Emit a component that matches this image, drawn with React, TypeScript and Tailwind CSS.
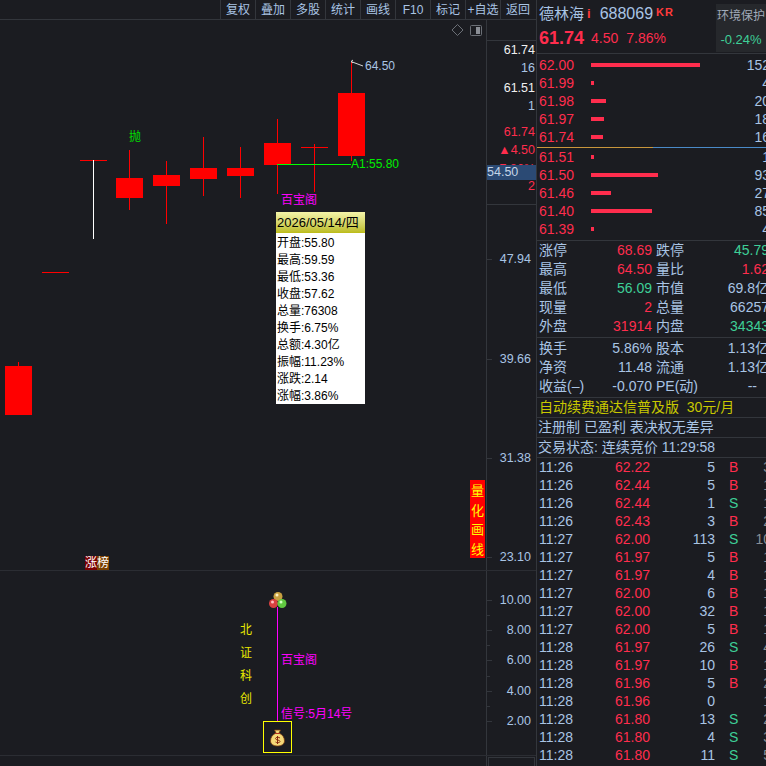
const FONT = "font-['Liberation_Sans','Noto_Sans_CJK_SC',sans-serif]";

const toolbar = ['复权', '叠加', '多股', '统计', '画线', 'F10', '标记', '+自选', '返回'];

const asks = [
  ['62.00', 109, '152'],
  ['61.99', 3, '4'],
  ['61.98', 15, '20'],
  ['61.97', 13, '18'],
  ['61.74', 12, '16'],
] as const;
const bids = [
  ['61.51', 3, '1'],
  ['61.50', 67, '93'],
  ['61.46', 20, '27'],
  ['61.40', 61, '85'],
  ['61.39', 3, '4'],
] as const;

const RED = 'text-[#ff2d4d]';
const GRN = 'text-[#3ecf97]';
const BLU = 'text-[#a9c4e4]';

const stats1 = [
  ['涨停', '68.69', RED, '跌停', '45.79', GRN],
  ['最高', '64.50', RED, '量比', '1.62', RED],
  ['最低', '56.09', GRN, '市值', '69.8亿', BLU],
  ['现量', '2', RED, '总量', '66257', BLU],
  ['外盘', '31914', RED, '内盘', '34343', GRN],
];
const stats2 = [
  ['换手', '5.86%', BLU, '股本', '1.13亿', BLU],
  ['净资', '11.48', BLU, '流通', '1.13亿', BLU],
  ['收益(–)', '-0.070', BLU, 'PE(动)', '--', BLU],
];

const ticks = [
  ['11:26', '62.22', '5', 'B', '3'],
  ['11:26', '62.44', '5', 'B', '1'],
  ['11:26', '62.44', '1', 'S', '1'],
  ['11:26', '62.43', '3', 'B', '2'],
  ['11:27', '62.00', '113', 'S', '10'],
  ['11:27', '61.97', '5', 'B', '1'],
  ['11:27', '61.97', '4', 'B', '1'],
  ['11:27', '62.00', '6', 'B', '1'],
  ['11:27', '62.00', '32', 'B', '1'],
  ['11:27', '62.00', '5', 'B', '1'],
  ['11:28', '61.97', '26', 'S', '4'],
  ['11:28', '61.97', '10', 'B', '1'],
  ['11:28', '61.96', '5', 'B', '2'],
  ['11:28', '61.96', '0', '', '1'],
  ['11:28', '61.80', '13', 'S', '2'],
  ['11:28', '61.80', '4', 'S', '3'],
  ['11:28', '61.80', '11', 'S', '5'],
];

const tip = ['开盘:55.80', '最高:59.59', '最低:53.36', '收盘:57.62', '总量:76308', '换手:6.75%', '总额:4.30亿', '振幅:11.23%', '涨跌:2.14', '涨幅:3.86%'];

function Candles() {
  const c: [number, number, number, number, number][] = [
    [5, 366, 415, 362, 415],
    [116, 178, 198, 150, 210],
    [153, 175, 186, 161, 224],
    [190, 168, 179, 137, 196],
    [227, 168, 176, 147, 198],
    [264, 143, 165, 119, 194],
    [338, 93, 156, 62, 161],
  ];
  return (
    <svg className="absolute left-0 top-0" width="486" height="551">
      <g transform="translate(0,-20)" shapeRendering="crispEdges">
        {c.map(([x, t, b, h, l]) => (
          <g key={x}>
            <rect x={x + 13} y={h} width="1" height={l - h} fill="#ff0000" />
            <rect x={x} y={t} width="27" height={b - t} fill="#ff0000" />
          </g>
        ))}
        <rect x="42" y="272" width="27" height="1" fill="#ff0000" />
        <rect x="80" y="160" width="27" height="1" fill="#ff0000" />
        <rect x="93" y="160" width="1" height="79" fill="#ffffff" />
        <rect x="301" y="147" width="27" height="1" fill="#ff0000" />
        <rect x="314" y="144" width="1" height="48" fill="#ff0000" />
        <rect x="277" y="164" width="74" height="1" fill="#00ff00" />
      </g>
      <path d="M351 41.500 L353 40 M351 41.500 L353 43 M351 41.500 L363 46" stroke="#d8d8d8" fill="none" />
      <path d="M457.500 4.500 L463 10 L457.500 15.500 L452 10 Z" stroke="#6b6f76" fill="none" />
      <rect x="470.500" y="5.500" width="11" height="10" rx="1" stroke="#6b6f76" fill="none" />
      <rect x="476" y="7" width="4" height="7" fill="#8a8e95" />
    </svg>
  );
}

function Label({ className, children }: { className: string; children: React.ReactNode }) {
  return <div className={`absolute leading-none whitespace-nowrap ${className}`}>{children}</div>;
}

function AxisTick({ y, label }: { y: number; label: string }) {
  return (
    <div className="absolute left-0 right-0 flex items-center justify-end pr-[5px] h-[14px]" style={{ top: y - 7 }}>
      <span className="absolute left-0 top-[7px] w-[5px] h-px bg-[#33363c]" />
      <span className={`${BLU} text-[12.5px]`}>{label}</span>
    </div>
  );
}

function MinorTick({ y }: { y: number }) {
  return <span className="absolute left-0 w-[3px] h-px bg-[#33363c]" style={{ top: y }} />;
}

export default function App() {
  return (
    <div className={`${FONT} flex w-[766px] h-[766px] overflow-hidden bg-[#1b1c21] text-[12px]`}>
      <div className="flex flex-col w-[537px] shrink-0 border-r border-[#33363c]">
        <div className="flex justify-end items-center h-[20px] shrink-0 border-b border-[#33363c] pr-[1px]">
          {toolbar.map((t) => (
            <div key={t} className={`w-[35px] h-full flex items-center justify-center whitespace-nowrap border-l border-[#33363c] ${BLU} text-[12px]`}>
              {t}
            </div>
          ))}
        </div>
        <div className="relative h-[551px] shrink-0 border-b border-[#2b2d33]">
          <Candles />
          <Label className="left-[129px] top-[111px] text-[#00e000]">抛</Label>
          <Label className={`left-[365px] top-[40px] ${BLU}`}>64.50</Label>
          <Label className="left-[351px] top-[138px] text-[#00ee00]">A1:55.80</Label>
          <Label className="left-[281px] top-[174px] text-[#ff00ff]">百宝阁</Label>
          <div className="absolute left-[276px] top-[192px] w-[89px] h-[192px] overflow-hidden bg-white text-black">
            <div className="h-[21px] flex items-center pl-[1px] whitespace-nowrap text-[13px] bg-gradient-to-b from-[#f4f4a8] to-[#bcbc14]">2026/05/14/四</div>
            <div className="pt-[2px]">
              {tip.map((t) => (
                <div key={t} className="h-[17px] leading-[17px] pl-[1px] whitespace-nowrap">{t}</div>
              ))}
            </div>
          </div>
          <div className="absolute left-[470px] top-[460px] w-[15px] h-[78px] bg-[#ff0000] flex flex-col items-center justify-around py-[1px] text-[13px] text-[#ffff00]">
            {'量化画线'.split('').map((s) => <span key={s}>{s}</span>)}
          </div>
          <div className="absolute left-[85px] top-[536px] flex text-white h-[14px] leading-[14px]">
            <span className="bg-[#7a0000]">涨</span>
            <span className="bg-[#7a4000]">榜</span>
          </div>
          <div className="absolute left-[486px] top-0 bottom-0 right-0 border-l border-[#33363c]">
            <div className="h-[21px] border-b border-[#33363c]" />
            <div className="h-[164px] border-b border-[#33363c] relative overflow-hidden text-[12.5px]">
              <Label className="right-[1px] top-[3px] text-[#f0f0f0]">61.74</Label>
              <Label className={`right-[1px] top-[21px] ${BLU}`}>16</Label>
              <Label className="right-[1px] top-[41px] text-[#f0f0f0]">61.51</Label>
              <Label className={`right-[1px] top-[59px] ${BLU}`}>1</Label>
              <Label className={`right-[1px] top-[85px] ${RED}`}>61.74</Label>
              <Label className={`right-[1px] top-[103px] ${RED}`}>▲4.50</Label>
              <Label className={`right-[1px] top-[122px] ${RED}`}>7.86%</Label>
              <Label className={`right-[1px] top-[139px] ${RED}`}>2</Label>
              <div className="absolute left-0 right-0 top-[124px] h-[15px] bg-[#2b4a74] leading-[15px] text-[#c4d4e8]">54.50</div>
            </div>
            <AxisTick y={239} label="47.94" />
            <AxisTick y={339} label="39.66" />
            <AxisTick y={438} label="31.38" />
            <AxisTick y={537} label="23.10" />
          </div>
        </div>
        <div className="relative h-[185px] shrink-0 border-b border-[#2b2d33]">
          <div className="absolute left-[240px] top-[53px] flex flex-col gap-[11px] text-[#e8e800]">
            {'北证科创'.split('').map((s) => <span key={s} className="leading-[12px]">{s}</span>)}
          </div>
          <svg className="absolute left-[263px] top-[20px]" width="30" height="165">
            <rect x="14" y="16" width="1" height="114" fill="#ff00ff" />
            <circle cx="15" cy="5.500" r="4.500" fill="#c8a040" />
            <circle cx="10.500" cy="12.500" r="4.500" fill="#d84040" />
            <circle cx="19" cy="12.500" r="4.500" fill="#60c840" />
            <circle cx="14" cy="4" r="1.500" fill="#fff0c0" />
            <circle cx="9.500" cy="11" r="1.500" fill="#ffc0c0" />
            <circle cx="18" cy="11" r="1.500" fill="#d0ffc0" />
            <rect x="0.500" y="130.500" width="28" height="31" fill="none" stroke="#ffff00" />
            <path d="M11.500 139 h6 l-1.500 3 c3.500 1.500 5.500 4.500 5.500 8 c0 3 -3 5 -7 5 c-4 0 -7 -2 -7 -5 c0 -3.500 2 -6.500 5.500 -8 Z" fill="#f4d878" stroke="#7a3a10" strokeWidth="0.800" />
            <rect x="12" y="142" width="5" height="1" fill="#b03020" />
            <path d="M17 147 c-1 -1 -4.500 -1 -4.500 0.500 c0 2 4.500 1 4.500 3 c0 1.500 -3.500 1.500 -4.500 0.500 M14.500 145 v8" fill="none" stroke="#8a2a10" strokeWidth="1" />
          </svg>
          <Label className="left-[281px] top-[83px] text-[#ff00ff]">百宝阁</Label>
          <Label className="left-[281px] top-[137px] text-[#ff00ff]">信号:5月14号</Label>
          <div className="absolute left-[486px] top-0 bottom-0 right-0 border-l border-[#33363c]">
            <AxisTick y={29} label="10.00" />
            <MinorTick y={44} />
            <AxisTick y={59} label="8.00" />
            <MinorTick y={74} />
            <AxisTick y={89} label="6.00" />
            <MinorTick y={105} />
            <AxisTick y={120} label="4.00" />
            <MinorTick y={135} />
            <AxisTick y={150} label="2.00" />
          </div>
        </div>
        <div className="flex-1 pl-[486px]">
          <div className="h-full border-l border-[#33363c] pt-[1px] pl-[1px] pr-[1px]">
            <div className="h-full border border-b-0 border-[#33363c]" />
          </div>
        </div>
      </div>

      <div className="flex-1 min-w-0 flex flex-col overflow-hidden text-[14px]">
        <div className="flex h-[54px] shrink-0 border-b border-[#33363c]">
          <div className="flex-1 flex flex-col pl-[2px]">
            <div className="flex items-center h-[28px] whitespace-nowrap">
              <span className={`${BLU} text-[15px]`}>德林海</span>
              <span className="text-[#ff3b3b] text-[13px] ml-[3px] font-bold">i</span>
              <span className={`${BLU} text-[16px] ml-[9px]`}>688069</span>
              <span className="text-[#ff3b3b] text-[11px] font-bold ml-[3px] tracking-[1px] -mt-[4px]">KR</span>
            </div>
            <div className={`flex items-center h-[21px] whitespace-nowrap ${RED}`}>
              <span className="text-[18px] font-bold">61.74</span>
              <span className="text-[14px] ml-[7px]">4.50</span>
              <span className="text-[14px] ml-[8px]">7.86%</span>
            </div>
          </div>
          <div className="w-[50px] mt-[4px] mb-[1px] bg-[#26282c] flex flex-col items-center justify-between pt-[3px] pb-[3px] whitespace-nowrap">
            <span className="text-[#a0aab8] text-[12px]">环境保护</span>
            <span className="text-[#3ecf97] text-[13px]">-0.24%</span>
          </div>
        </div>

        <div className="h-[93px] shrink-0 pt-[2px]">
          {asks.map(([p, w, v]) => <Book key={p} p={p} w={w} v={v} />)}
        </div>
        <div className="flex h-px shrink-0">
          <div className="w-[116px] bg-[#c8963c]" />
          <div className="flex-1 bg-[#4a8ac8]" />
        </div>
        <div className="h-[93px] shrink-0 border-b border-[#33363c]">
          {bids.map(([p, w, v]) => <Book key={p} p={p} w={w} v={v} />)}
        </div>

        <div className="h-[97px] shrink-0 border-b border-[#33363c]">
          {stats1.map((r) => <Stat key={r[0]} r={r} />)}
        </div>
        <div className="h-[60px] shrink-0 pt-[1px] border-b border-[#33363c]">
          {stats2.map((r) => <Stat key={r[0]} r={r} />)}
        </div>
        <div className="h-[20px] shrink-0 flex items-center pl-[2px] whitespace-nowrap border-b border-[#33363c] text-[#c8c800]">
          自动续费通达信普及版 &nbsp;30元/月
        </div>
        <div className={`h-[20px] shrink-0 flex items-center pl-[1px] whitespace-nowrap border-b border-[#33363c] ${BLU}`}>
          注册制 已盈利 表决权无差异
        </div>
        <div className={`h-[20px] shrink-0 flex items-center pl-[1px] whitespace-nowrap border-b border-[#33363c] ${BLU}`}>
          交易状态: 连续竞价 11:29:58
        </div>
        <div>
          {ticks.map((t, i) => (
            <div key={i} className="flex h-[18px] items-center whitespace-nowrap pl-[2px]">
              <span className={`w-[50px] shrink-0 ${BLU}`}>{t[0]}</span>
              <span className={`w-[61px] shrink-0 text-right ${RED}`}>{t[1]}</span>
              <span className={`w-[65px] shrink-0 text-right ${BLU}`}>{t[2]}</span>
              <span className={`w-[14px] shrink-0 ml-[14px] ${t[3] === 'B' ? RED : GRN}`}>{t[3]}</span>
              <span className="w-[28px] shrink-0 text-right text-[#8a8e95]">{t[4]}</span>
            </div>
          ))}
        </div>
      </div>
    </div>
  );
}

function Book({ p, w, v }: { p: string; w: number; v: string }) {
  return (
    <div className="flex items-center h-[18px] relative whitespace-nowrap pl-[2px]">
      <span className={`w-[52px] ${RED}`}>{p}</span>
      <span className="h-[4px] bg-[#ff2d4d]" style={{ width: w }} />
      <span className={`absolute right-[-4px] ${BLU}`}>{v}</span>
    </div>
  );
}

function Stat({ r }: { r: string[] }) {
  return (
    <div className="flex items-center h-[19px] whitespace-nowrap relative pl-[2px]">
      <span className={`${BLU} w-[40px] shrink-0`}>{r[0]}</span>
      <span className={`w-[73px] shrink-0 text-right ${r[2]}`}>{r[1]}</span>
      <span className={`${BLU} ml-[4px]`}>{r[3]}</span>
      <span className={`absolute ${r[4] === '--' ? 'right-[9px]' : 'right-[-3px]'} ${r[5]}`}>{r[4]}</span>
    </div>
  );
}
